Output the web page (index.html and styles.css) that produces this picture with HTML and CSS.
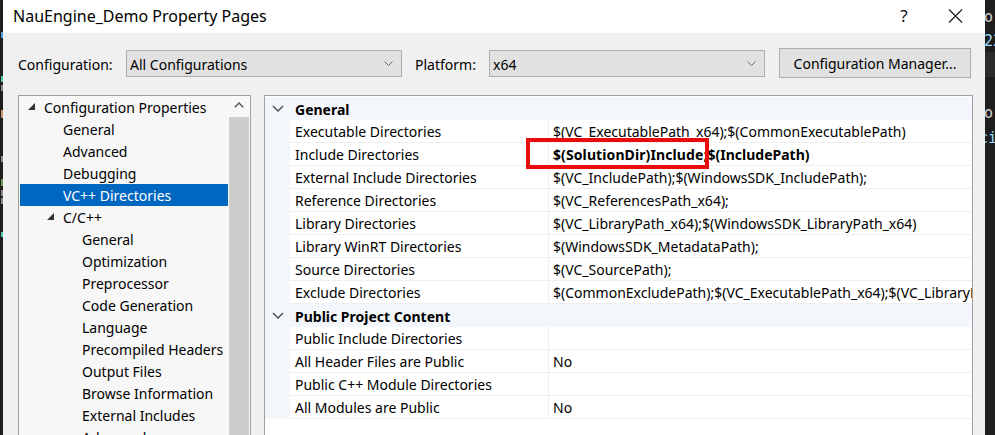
FILE: index.html
```html
<!DOCTYPE html>
<html>
<head>
<meta charset="utf-8">
<title>NauEngine_Demo Property Pages</title>
<link rel="stylesheet" href="styles.css">
</head>
<body>
<div class="screen">
  <div class="edge-left">
    <i class="eg eg-1 c-blue"></i>
    <i class="eg eg-2 c-teal"></i>
    <i class="eg eg-3 c-grey"></i>
    <i class="eg eg-4 c-orange"></i>
    <i class="eg eg-5 c-grey"></i>
    <i class="eg eg-6 c-green"></i>
    <i class="eg eg-7 c-grey"></i>
    <i class="eg eg-8 c-grey"></i>
    <i class="eg eg-9 c-teal"></i>
  </div>

  <div class="dialog">
    <div class="titlebar">
      <span class="title">NauEngine_Demo Property Pages</span>
      <span class="help">?</span>
      <svg class="close" width="15" height="14" viewBox="0 0 15 14"><path d="M1 0.5 L14 13.5 M14 0.5 L1 13.5" stroke="#1a1a1a" stroke-width="1.1" fill="none"/></svg>
    </div>

    <div class="body">
      <div class="toolbar">
        <span class="lbl lbl-config">Configuration:</span>
        <div class="combo">
          <span class="combo-text">All Configurations</span>
          <svg class="combo-arrow" width="9" height="5" viewBox="0 0 9 5"><path d="M0.5 0.5 L4.5 4.5 L8.5 0.5" stroke="#6a6a6a" stroke-width="1" fill="none"/></svg>
        </div>
        <span class="lbl lbl-platform">Platform:</span>
        <div class="combo">
          <span class="combo-text">x64</span>
          <svg class="combo-arrow" width="9" height="5" viewBox="0 0 9 5"><path d="M0.5 0.5 L4.5 4.5 L8.5 0.5" stroke="#6a6a6a" stroke-width="1" fill="none"/></svg>
        </div>
        <button class="btn">Configuration Manager...</button>
      </div>

      <div class="panels">
        <div class="tree">
          <div class="tree-list">
            <div class="node lvl0"><svg class="tri" width="7" height="7" viewBox="0 0 7 7"><path d="M7 0 L7 7 L0 7 Z" fill="#333"/></svg><span>Configuration Properties</span></div>
            <div class="node lvl1"><span>General</span></div>
            <div class="node lvl1"><span>Advanced</span></div>
            <div class="node lvl1"><span>Debugging</span></div>
            <div class="node lvl1 selected"><span>VC++ Directories</span></div>
            <div class="node lvl1 has-tri"><svg class="tri" width="7" height="7" viewBox="0 0 7 7"><path d="M7 0 L7 7 L0 7 Z" fill="#333"/></svg><span>C/C++</span></div>
            <div class="node lvl2"><span>General</span></div>
            <div class="node lvl2"><span>Optimization</span></div>
            <div class="node lvl2"><span>Preprocessor</span></div>
            <div class="node lvl2"><span>Code Generation</span></div>
            <div class="node lvl2"><span>Language</span></div>
            <div class="node lvl2"><span>Precompiled Headers</span></div>
            <div class="node lvl2"><span>Output Files</span></div>
            <div class="node lvl2"><span>Browse Information</span></div>
            <div class="node lvl2"><span>External Includes</span></div>
            <div class="node lvl2"><span>Advanced</span></div>
          </div>
          <div class="vscroll">
            <div class="vscroll-up"><svg width="10" height="6" viewBox="0 0 10 6"><path d="M0.8 5.2 L5 1 L9.2 5.2" stroke="#555" stroke-width="1.4" fill="none"/></svg></div>
            <div class="vscroll-thumb"></div>
          </div>
        </div>

        <div class="grid">
          <div class="cat">
            <div class="gutter"><svg width="12" height="7" viewBox="0 0 12 7"><path d="M1 1 L6 6 L11 1" stroke="#555" stroke-width="1.5" fill="none"/></svg></div>
            <div class="cat-name">General</div>
          </div>
          <div class="row"><div class="gutter"></div><div class="name">Executable Directories</div><div class="value">$(VC_ExecutablePath_x64);$(CommonExecutablePath)</div></div>
          <div class="row"><div class="gutter"></div><div class="name">Include Directories</div><div class="value bold"><span class="bold-a">$(SolutionDir)Include;</span>$(IncludePath)<span class="mark"></span></div></div>
          <div class="row"><div class="gutter"></div><div class="name">External Include Directories</div><div class="value">$(VC_IncludePath);$(WindowsSDK_IncludePath);</div></div>
          <div class="row"><div class="gutter"></div><div class="name">Reference Directories</div><div class="value">$(VC_ReferencesPath_x64);</div></div>
          <div class="row"><div class="gutter"></div><div class="name">Library Directories</div><div class="value">$(VC_LibraryPath_x64);$(WindowsSDK_LibraryPath_x64)</div></div>
          <div class="row"><div class="gutter"></div><div class="name">Library WinRT Directories</div><div class="value">$(WindowsSDK_MetadataPath);</div></div>
          <div class="row"><div class="gutter"></div><div class="name">Source Directories</div><div class="value">$(VC_SourcePath);</div></div>
          <div class="row"><div class="gutter"></div><div class="name">Exclude Directories</div><div class="value">$(CommonExcludePath);$(VC_ExecutablePath_x64);$(VC_LibraryPath_x64);$(WindowsSDK_LibraryPath_x64)</div></div>
          <div class="cat">
            <div class="gutter"><svg width="12" height="7" viewBox="0 0 12 7"><path d="M1 1 L6 6 L11 1" stroke="#555" stroke-width="1.5" fill="none"/></svg></div>
            <div class="cat-name">Public Project Content</div>
          </div>
          <div class="row"><div class="gutter"></div><div class="name">Public Include Directories</div><div class="value"></div></div>
          <div class="row"><div class="gutter"></div><div class="name">All Header Files are Public</div><div class="value">No</div></div>
          <div class="row"><div class="gutter"></div><div class="name">Public C++ Module Directories</div><div class="value"></div></div>
          <div class="row"><div class="gutter"></div><div class="name">All Modules are Public</div><div class="value">No</div></div>
        </div>
      </div>
    </div>
  </div>

  <div class="edge-right">
    <span class="er er-1 c-light">o'</span>
    <span class="er er-2 c-lblue">22</span>
    <div class="er-band"></div>
    <span class="er er-3 c-light">o</span>
    <span class="er er-4 c-lblue">cie</span>
  </div>
</div>
</body>
</html>
```

FILE: styles.css
```css
* { box-sizing: border-box; margin: 0; padding: 0; }

html, body {
  width: 995px;
  height: 435px;
  overflow: hidden;
}

body {
  font-family: "Noto Sans", "Open Sans", sans-serif;
  font-size: 14px;
  color: #000;
  background: #1e1e1e;
}

.screen {
  display: flex;
  width: 995px;
  height: 435px;
}

/* dark editor strips at the edges */
.edge-left {
  width: 3px;
  flex: none;
  background: #1e1e1e;
  display: flex;
  flex-direction: column;
  align-items: flex-end;
  overflow: hidden;
}
.eg { display: block; width: 2px; height: 6px; }
.eg-1 { margin-top: 32px; }
.eg-2 { margin-top: 38px; }
.eg-3 { margin-top: 3px; }
.eg-4 { margin-top: 19px; height: 8px; }
.eg-5 { margin-top: 38px; }
.eg-6 { margin-top: 17px; height: 7px; }
.eg-7 { margin-top: 4px; }
.eg-8 { margin-top: 2px; }
.eg-9 { margin-top: 28px; height: 5px; }
.c-blue { background: #569cd6; color: #569cd6; }
.c-teal { background: #4ec9b0; color: #4ec9b0; }
.c-grey { background: #8a8a8a; color: #9a9a9a; }
.c-orange { background: #ce9178; color: #ce9178; }
.c-green { background: #6a9955; color: #6a9955; }
.c-light { color: #d4d4d4; }
.c-lblue { color: #9cdcfe; }

.edge-right {
  width: 10px;
  flex: none;
  background: #1e1e1e;
  overflow: hidden;
  display: flex;
  flex-direction: column;
  font-family: "DejaVu Sans Mono", monospace;
  font-size: 15px;
  line-height: 18px;
}
.er { display: block; white-space: nowrap; margin-left: -1px; }
.er-1 { margin-top: 8px; }
.er-2 { margin-top: 6px; }
.er-band { height: 25px; margin-top: 2px; background: #2b2b2b; }
.er-3 { margin-top: 27px; }
.er-4 { margin-top: 7px; margin-left: -6px; }

/* dialog */
.dialog {
  width: 982px;
  flex: none;
  display: flex;
  flex-direction: column;
  background: #f0f0f0;
}

.titlebar {
  height: 33px;
  flex: none;
  background: #fff;
  display: flex;
  align-items: center;
  padding: 0 22px 0 10px;
}
.title {
  flex: 1;
  font-size: 16px;
  color: #000;
  padding-bottom: 2px;
}
.help {
  font-size: 17px;
  width: 10px;
  text-align: center;
  margin-right: 39px;
  color: #111;
  padding-bottom: 2px;
}
.close { display: block; margin-bottom: 2px; }

.body {
  flex: 1;
  display: flex;
  flex-direction: column;
  padding: 15px 13px 0 15px;
  min-height: 0;
}

.toolbar {
  height: 30px;
  flex: none;
  display: flex;
  align-items: center;
}
.lbl { white-space: nowrap; padding-top: 2px; }
.lbl-config { width: 108px; }
.lbl-platform { width: 74px; margin-left: 13px; }

.combo {
  width: 276px;
  height: 27px;
  background: #e1e1e1;
  border: 1px solid #adadad;
  display: flex;
  align-items: center;
  padding: 0 8px 0 3px;
}
.combo-text { flex: 1; white-space: nowrap; padding-top: 2px; }
.combo-arrow { display: block; }

.btn {
  width: 192px;
  height: 30px;
  margin-left: 14px;
  background: #e1e1e1;
  border: 1px solid #adadad;
  font-family: inherit;
  font-size: 14px;
  color: #000;
  padding-top: 1px;
}

.panels {
  flex: 1;
  display: flex;
  gap: 13px;
  margin-top: 17px;
  min-height: 0;
}

/* tree */
.tree {
  width: 233px;
  flex: none;
  border: 1px solid #a0a0a0;
  border-bottom: none;
  background: #f7f7f7;
  display: flex;
}
.tree-list {
  flex: 1;
  padding: 0 1px;
  overflow: hidden;
}
.node {
  height: 22px;
  display: flex;
  align-items: center;
  white-space: nowrap;
  color: #000;
}
.node span { padding-top: 1px; }
.node .tri { display: block; margin-right: 9px; margin-bottom: 1px; flex: none; }
.lvl0 { padding-left: 8px; }
.lvl1 { padding-left: 43px; }
.lvl1.has-tri { padding-left: 27px; }
.lvl2 { padding-left: 62px; }
.selected { background: #0067c0; color: #fff; }

.vscroll {
  width: 21px;
  flex: none;
  padding-right: 1px;
  display: flex;
  flex-direction: column;
}
.vscroll-up {
  height: 21px;
  display: flex;
  align-items: center;
  justify-content: center;
  padding-bottom: 4px;
}
.vscroll-up svg { display: block; }
.vscroll-thumb {
  flex: 1;
  background: #cdcdcd;
}

/* property grid */
.grid {
  width: 709px;
  flex: none;
  border: 1px solid #a0a0a0;
  border-bottom: none;
  background: #fff;
  padding-top: 1px;
  overflow: hidden;
}
.cat, .row {
  display: flex;
  height: 23px;
}
.cat { background: #f3f6fb; }
.gutter {
  width: 25px;
  flex: none;
  background: #f3f6fb;
  display: flex;
  align-items: center;
  justify-content: center;
  padding-left: 1px;
}
.gutter svg { display: block; margin-bottom: 1px; }
.cat-name {
  font-weight: bold;
  padding-left: 5px;
  padding-top: 2px;
  line-height: 21px;
  white-space: nowrap;
}
.row .name, .row .value {
  border-bottom: 1px solid #efefef;
  padding-top: 2px;
  line-height: 20px;
  white-space: nowrap;
  overflow: hidden;
}
.row .name {
  width: 259px;
  flex: none;
  padding-left: 5px;
  border-right: 1px solid #efefef;
}
.row .value {
  flex: 1;
  padding-left: 4px;
}
.row .value.bold {
  font-weight: bold;
  position: relative;
  overflow: visible;
}
.bold-a { letter-spacing: 0.1px; }
.mark {
  position: absolute;
  left: -23px;
  top: -5px;
  width: 183px;
  height: 31px;
  border: 4px solid #e80c0c;
}
```
